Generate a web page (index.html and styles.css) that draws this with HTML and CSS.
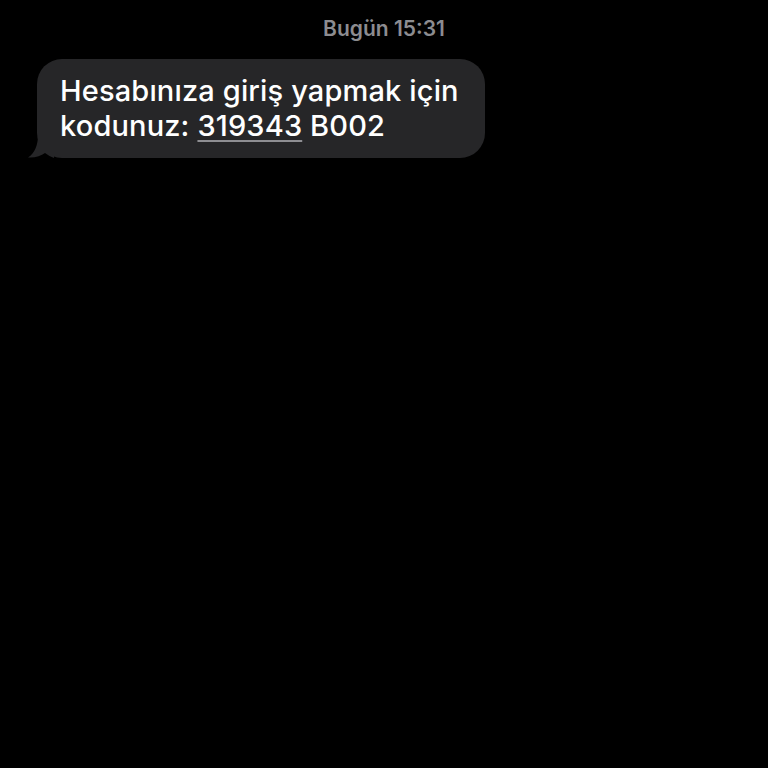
FILE: index.html
```html
<!DOCTYPE html>
<html lang="tr">
<head>
<meta charset="utf-8">
<link rel="stylesheet" href="styles.css">
</head>
<body>
<div class="thread">
  <div class="stamp">Bugün 15:31</div>
  <div class="bubble">
    <p class="msg">Hesabınıza giriş yapmak için<br>kodunuz: <span class="code">319343</span> B002</p>
    <svg class="tail" width="26" height="24" viewBox="0 0 26 24"><path d="M10 0 C10 10 7 18 0 22.5 C7 23 13 21 17 18 C20 20 23 22 26 23 L26 0 Z" fill="#262628"/></svg>
  </div>
</div>
</body>
</html>
```
FILE: styles.css
```css
html, body {
  margin: 0;
  padding: 0;
  background: #000;
  height: 100%;
}
.thread {
  display: flex;
  flex-direction: column;
  padding-top: 15px;
  font-family: Inter, "Noto Sans", sans-serif;
}
.stamp {
  text-align: center;
  color: #8c8c90;
  font-size: 21px;
  font-weight: 600;
  line-height: 28px;
}
.bubble {
  position: relative;
  margin-top: 16px;
  margin-left: 37px;
  width: 448px;
  box-sizing: border-box;
  background: #262628;
  border-radius: 25px;
  padding: 14px 20px 15px 23px;
}
.msg {
  margin: 0;
  color: #fff;
  font-size: 29px;
  font-weight: 500;
  letter-spacing: 0.15px;
  line-height: 35px;
}
.code {
  text-decoration: underline;
  text-decoration-color: #8e8e92;
  text-decoration-thickness: 2px;
  text-underline-offset: 4px;
}
.tail {
  position: absolute;
  left: -9px;
  bottom: -1px;
}
```
